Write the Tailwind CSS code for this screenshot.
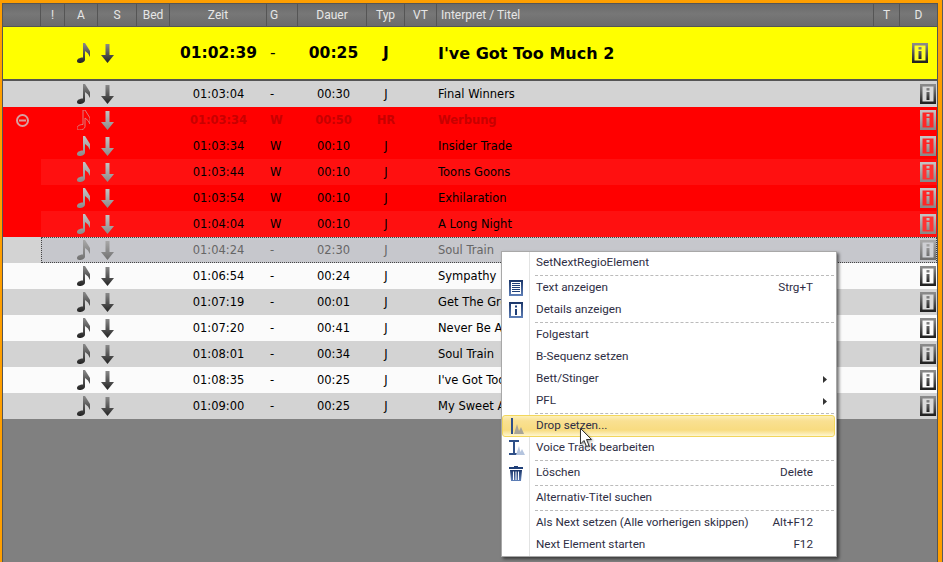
<!DOCTYPE html>
<html lang="en">
<head>
    <meta charset="UTF-8">
    <title>Playlist</title>
    <script src="https://cdn.jsdelivr.net/npm/@tailwindcss/browser@4"></script>
</head>
<body class="w-[943px] h-[562px] overflow-hidden bg-[#5a5a5a] font-['DejaVu_Sans',sans-serif]">

<!-- shared icons -->
<svg class="absolute w-0 h-0">
    <defs>
        <linearGradient id="gd" x1="0" y1="0" x2="0" y2="1"><stop offset="0" stop-color="#8a8a8a"/><stop offset="1" stop-color="#222"/></linearGradient>
        <linearGradient id="gl" x1="0" y1="0" x2="0" y2="1"><stop offset="0" stop-color="#c4c4c4"/><stop offset="1" stop-color="#8a8a8a"/></linearGradient>
        <linearGradient id="gs" x1="0" y1="0" x2="0" y2="1"><stop offset="0" stop-color="#a8a8a8"/><stop offset="1" stop-color="#707070"/></linearGradient>
        <linearGradient id="gb" x1="0" y1="0" x2="0" y2="1"><stop offset="0" stop-color="#1a3568"/><stop offset="1" stop-color="#5f80b8"/></linearGradient>
        <symbol id="note" viewBox="0 0 13 20"><path d="M6 0H8L13 8V14L11 10.500L8 8V16.500C8 18.500 5.500 20 2.500 20C.8 20 0 19.200 0 18C0 16.200 2.500 14.500 6 14.500Z"/></symbol>
        <symbol id="arrow" viewBox="0 0 13 19"><path d="M4.500 0H8.500V11H13L6.500 19L0 11H4.500Z"/></symbol>
        <symbol id="info" viewBox="0 0 16 20">
            <rect x="1.250" y="1.250" width="13.500" height="17.500" fill="#fff" fill-opacity=".15" stroke-width="2.500"/>
            <path stroke="none" d="M6.500 4H9.500V6.500H6.500ZM6.500 8H9.500V16H6.500Z"/>
        </symbol>
    </defs>
</svg>

<div class="w-[942px] h-[562px] bg-[#ff9f00] pl-[2px] pt-[3px] pr-[4px]">
    <div class="relative h-full bg-[#808080] border-x border-t border-[#555]">

        <!-- header -->
        <div class="grid grid-cols-[38px_24px_33px_39px_33px_97px_31px_69px_38px_32px_437px_26px_37px] h-[23px] border-b border-[#555] bg-[linear-gradient(#6a6a6a,#777_45%,#6b6b6b)] text-[#e6e6e6] text-[12px] font-['Roboto',sans-serif] leading-[23px] text-center">
            <span class="border-r border-[#555]"></span>
            <span class="border-r border-[#555]">!</span>
            <span class="border-r border-[#555]">A</span>
            <span class="border-r border-[#555]">S</span>
            <span class="border-r border-[#555]">Bed</span>
            <span class="border-r border-[#555]">Zeit</span>
            <span class="border-r border-[#555] text-left pl-[3px]">G</span>
            <span class="border-r border-[#555]">Dauer</span>
            <span class="border-r border-[#555]">Typ</span>
            <span class="border-r border-[#555]">VT</span>
            <span class="border-r border-[#555] text-left pl-[4px]">Interpret / Titel</span>
            <span class="border-r border-[#555]">T</span>
            <span>D</span>
        </div>

        <!-- current element -->
        <div class="grid grid-cols-[38px_24px_33px_39px_33px_97px_31px_69px_38px_32px_437px_26px_37px] h-[54px] items-center bg-[#ffff00] border-b-2 border-[#555] text-[15.500px] font-bold text-black [&>span]:pt-[2px]">
            <span></span><span></span>
            <svg class="ml-3 w-[13px] h-5" fill="url(#gd)"><use href="#note"/></svg>
            <svg class="ml-[3px] w-[13px] h-[19px]" fill="url(#gd)"><use href="#arrow"/></svg>
            <span></span>
            <span class="text-center">01:02:39</span>
            <span class="pl-[3px] font-normal">-</span>
            <span class="text-center pl-[2px]">00:25</span>
            <span class="text-center">J</span>
            <span></span>
            <span class="pl-px text-[16px]">I've Got Too Much 2</span>
            <span></span>
            <svg class="ml-3 w-4 h-5" fill="url(#gd)" stroke="url(#gd)"><use href="#info"/></svg>
        </div>

        <!-- rows -->
        <div class="grid grid-cols-[38px_24px_33px_39px_33px_97px_31px_69px_38px_32px_437px_26px_37px] h-[26px] items-center bg-[#d3d3d3] text-[11.500px] text-black [&>span]:pt-[2px]">
            <span></span><span></span>
            <svg class="ml-3 w-[13px] h-5" fill="url(#gd)"><use href="#note"/></svg>
            <svg class="ml-[3px] w-[13px] h-[19px]" fill="url(#gd)"><use href="#arrow"/></svg>
            <span></span>
            <span class="text-center">01:03:04</span>
            <span class="pl-[3px]">-</span>
            <span class="text-center pl-[2px]">00:30</span>
            <span class="text-center">J</span>
            <span></span>
            <span class="pl-px">Final Winners</span>
            <span></span>
            <svg class="ml-5 w-4 h-5" fill="url(#gd)" stroke="url(#gd)"><use href="#info"/></svg>
        </div>

        <div class="grid grid-cols-[38px_24px_33px_39px_33px_97px_31px_69px_38px_32px_437px_26px_37px] h-[26px] items-center bg-[#ff0000] text-[11.500px] font-bold text-[#c80000] [&>span]:pt-[2px]">
            <svg class="ml-[13px] w-[13px] h-[13px]" viewBox="0 0 13 13" fill="none" stroke="#d8a0a0" stroke-width="2"><circle cx="6.500" cy="6.500" r="5.500"/><path d="M3 6.500H10"/></svg>
            <span></span>
            <svg class="ml-3 w-[13px] h-5" fill="none" stroke="#d88a8a" stroke-width=".9"><use href="#note"/></svg>
            <svg class="ml-[3px] w-[13px] h-[19px]" fill="url(#gl)"><use href="#arrow"/></svg>
            <span></span>
            <span class="text-center">01:03:34</span>
            <span class="pl-[3px]">W</span>
            <span class="text-center pl-[2px]">00:50</span>
            <span class="text-center">HR</span>
            <span></span>
            <span class="pl-px">Werbung</span>
            <span></span>
            <svg class="ml-5 w-4 h-5" fill="url(#gl)" stroke="url(#gl)"><use href="#info"/></svg>
        </div>

        <div class="grid grid-cols-[38px_24px_33px_39px_33px_97px_31px_69px_38px_32px_437px_26px_37px] h-[26px] items-center bg-[#ff0000] text-[11.500px] text-black [&>span]:pt-[2px]">
            <span></span><span></span>
            <svg class="ml-3 w-[13px] h-5" fill="url(#gl)"><use href="#note"/></svg>
            <svg class="ml-[3px] w-[13px] h-[19px]" fill="url(#gl)"><use href="#arrow"/></svg>
            <span></span>
            <span class="text-center">01:03:34</span>
            <span class="pl-[3px]">W</span>
            <span class="text-center pl-[2px]">00:10</span>
            <span class="text-center">J</span>
            <span></span>
            <span class="pl-px">Insider Trade</span>
            <span></span>
            <svg class="ml-5 w-4 h-5" fill="url(#gl)" stroke="url(#gl)"><use href="#info"/></svg>
        </div>

        <div class="grid grid-cols-[38px_24px_33px_39px_33px_97px_31px_69px_38px_32px_437px_26px_37px] h-[26px] items-center bg-[linear-gradient(90deg,#ff0000_38px,#ff1010_38px)] text-[11.500px] text-black [&>span]:pt-[2px]">
            <span></span><span></span>
            <svg class="ml-3 w-[13px] h-5" fill="url(#gl)"><use href="#note"/></svg>
            <svg class="ml-[3px] w-[13px] h-[19px]" fill="url(#gl)"><use href="#arrow"/></svg>
            <span></span>
            <span class="text-center">01:03:44</span>
            <span class="pl-[3px]">W</span>
            <span class="text-center pl-[2px]">00:10</span>
            <span class="text-center">J</span>
            <span></span>
            <span class="pl-px">Toons Goons</span>
            <span></span>
            <svg class="ml-5 w-4 h-5" fill="url(#gl)" stroke="url(#gl)"><use href="#info"/></svg>
        </div>

        <div class="grid grid-cols-[38px_24px_33px_39px_33px_97px_31px_69px_38px_32px_437px_26px_37px] h-[26px] items-center bg-[#ff0000] text-[11.500px] text-black [&>span]:pt-[2px]">
            <span></span><span></span>
            <svg class="ml-3 w-[13px] h-5" fill="url(#gl)"><use href="#note"/></svg>
            <svg class="ml-[3px] w-[13px] h-[19px]" fill="url(#gl)"><use href="#arrow"/></svg>
            <span></span>
            <span class="text-center">01:03:54</span>
            <span class="pl-[3px]">W</span>
            <span class="text-center pl-[2px]">00:10</span>
            <span class="text-center">J</span>
            <span></span>
            <span class="pl-px">Exhilaration</span>
            <span></span>
            <svg class="ml-5 w-4 h-5" fill="url(#gl)" stroke="url(#gl)"><use href="#info"/></svg>
        </div>

        <div class="grid grid-cols-[38px_24px_33px_39px_33px_97px_31px_69px_38px_32px_437px_26px_37px] h-[26px] items-center bg-[linear-gradient(90deg,#ff0000_38px,#ff1010_38px)] text-[11.500px] text-black [&>span]:pt-[2px]">
            <span></span><span></span>
            <svg class="ml-3 w-[13px] h-5" fill="url(#gl)"><use href="#note"/></svg>
            <svg class="ml-[3px] w-[13px] h-[19px]" fill="url(#gl)"><use href="#arrow"/></svg>
            <span></span>
            <span class="text-center">01:04:04</span>
            <span class="pl-[3px]">W</span>
            <span class="text-center pl-[2px]">00:10</span>
            <span class="text-center">J</span>
            <span></span>
            <span class="pl-px">A Long Night</span>
            <span></span>
            <svg class="ml-5 w-4 h-5" fill="url(#gl)" stroke="url(#gl)"><use href="#info"/></svg>
        </div>

        <!-- focused row -->
        <div class="relative grid grid-cols-[38px_24px_33px_39px_33px_97px_31px_69px_38px_32px_437px_26px_37px] h-[26px] items-center bg-[linear-gradient(90deg,#d3d3d3_38px,#c6c7cc_38px)] text-[11.500px] text-[#666] [&>span]:pt-[2px]">
            <span class="absolute left-[38px] right-0 inset-y-0 border border-dotted border-[#444]"></span>
            <span></span><span></span>
            <svg class="ml-3 w-[13px] h-5" fill="url(#gs)"><use href="#note"/></svg>
            <svg class="ml-[3px] w-[13px] h-[19px]" fill="url(#gs)"><use href="#arrow"/></svg>
            <span></span>
            <span class="text-center">01:04:24</span>
            <span class="pl-[3px]">-</span>
            <span class="text-center pl-[2px]">02:30</span>
            <span class="text-center">J</span>
            <span></span>
            <span class="pl-px">Soul Train</span>
            <span></span>
            <svg class="ml-5 w-4 h-5" fill="url(#gs)" stroke="url(#gs)"><use href="#info"/></svg>
        </div>

        <div class="grid grid-cols-[38px_24px_33px_39px_33px_97px_31px_69px_38px_32px_437px_26px_37px] h-[26px] items-center bg-[#fbfbfb] text-[11.500px] text-black [&>span]:pt-[2px]">
            <span></span><span></span>
            <svg class="ml-3 w-[13px] h-5" fill="url(#gd)"><use href="#note"/></svg>
            <svg class="ml-[3px] w-[13px] h-[19px]" fill="url(#gd)"><use href="#arrow"/></svg>
            <span></span>
            <span class="text-center">01:06:54</span>
            <span class="pl-[3px]">-</span>
            <span class="text-center pl-[2px]">00:24</span>
            <span class="text-center">J</span>
            <span></span>
            <span class="pl-px">Sympathy</span>
            <span></span>
            <svg class="ml-5 w-4 h-5" fill="url(#gd)" stroke="url(#gd)"><use href="#info"/></svg>
        </div>

        <div class="grid grid-cols-[38px_24px_33px_39px_33px_97px_31px_69px_38px_32px_437px_26px_37px] h-[26px] items-center bg-[#d3d3d3] text-[11.500px] text-black [&>span]:pt-[2px]">
            <span></span><span></span>
            <svg class="ml-3 w-[13px] h-5" fill="url(#gd)"><use href="#note"/></svg>
            <svg class="ml-[3px] w-[13px] h-[19px]" fill="url(#gd)"><use href="#arrow"/></svg>
            <span></span>
            <span class="text-center">01:07:19</span>
            <span class="pl-[3px]">-</span>
            <span class="text-center pl-[2px]">00:01</span>
            <span class="text-center">J</span>
            <span></span>
            <span class="pl-px">Get The Groove</span>
            <span></span>
            <svg class="ml-5 w-4 h-5" fill="url(#gd)" stroke="url(#gd)"><use href="#info"/></svg>
        </div>

        <div class="grid grid-cols-[38px_24px_33px_39px_33px_97px_31px_69px_38px_32px_437px_26px_37px] h-[26px] items-center bg-[#fbfbfb] text-[11.500px] text-black [&>span]:pt-[2px]">
            <span></span><span></span>
            <svg class="ml-3 w-[13px] h-5" fill="url(#gd)"><use href="#note"/></svg>
            <svg class="ml-[3px] w-[13px] h-[19px]" fill="url(#gd)"><use href="#arrow"/></svg>
            <span></span>
            <span class="text-center">01:07:20</span>
            <span class="pl-[3px]">-</span>
            <span class="text-center pl-[2px]">00:41</span>
            <span class="text-center">J</span>
            <span></span>
            <span class="pl-px">Never Be Alone</span>
            <span></span>
            <svg class="ml-5 w-4 h-5" fill="url(#gd)" stroke="url(#gd)"><use href="#info"/></svg>
        </div>

        <div class="grid grid-cols-[38px_24px_33px_39px_33px_97px_31px_69px_38px_32px_437px_26px_37px] h-[26px] items-center bg-[#d3d3d3] text-[11.500px] text-black [&>span]:pt-[2px]">
            <span></span><span></span>
            <svg class="ml-3 w-[13px] h-5" fill="url(#gd)"><use href="#note"/></svg>
            <svg class="ml-[3px] w-[13px] h-[19px]" fill="url(#gd)"><use href="#arrow"/></svg>
            <span></span>
            <span class="text-center">01:08:01</span>
            <span class="pl-[3px]">-</span>
            <span class="text-center pl-[2px]">00:34</span>
            <span class="text-center">J</span>
            <span></span>
            <span class="pl-px">Soul Train</span>
            <span></span>
            <svg class="ml-5 w-4 h-5" fill="url(#gd)" stroke="url(#gd)"><use href="#info"/></svg>
        </div>

        <div class="grid grid-cols-[38px_24px_33px_39px_33px_97px_31px_69px_38px_32px_437px_26px_37px] h-[26px] items-center bg-[#fbfbfb] text-[11.500px] text-black [&>span]:pt-[2px]">
            <span></span><span></span>
            <svg class="ml-3 w-[13px] h-5" fill="url(#gd)"><use href="#note"/></svg>
            <svg class="ml-[3px] w-[13px] h-[19px]" fill="url(#gd)"><use href="#arrow"/></svg>
            <span></span>
            <span class="text-center">01:08:35</span>
            <span class="pl-[3px]">-</span>
            <span class="text-center pl-[2px]">00:25</span>
            <span class="text-center">J</span>
            <span></span>
            <span class="pl-px">I've Got Too Much</span>
            <span></span>
            <svg class="ml-5 w-4 h-5" fill="url(#gd)" stroke="url(#gd)"><use href="#info"/></svg>
        </div>

        <div class="grid grid-cols-[38px_24px_33px_39px_33px_97px_31px_69px_38px_32px_437px_26px_37px] h-[26px] items-center bg-[#d3d3d3] text-[11.500px] text-black [&>span]:pt-[2px]">
            <span></span><span></span>
            <svg class="ml-3 w-[13px] h-5" fill="url(#gd)"><use href="#note"/></svg>
            <svg class="ml-[3px] w-[13px] h-[19px]" fill="url(#gd)"><use href="#arrow"/></svg>
            <span></span>
            <span class="text-center">01:09:00</span>
            <span class="pl-[3px]">-</span>
            <span class="text-center pl-[2px]">00:25</span>
            <span class="text-center">J</span>
            <span></span>
            <span class="pl-px">My Sweet Angel</span>
            <span></span>
            <svg class="ml-5 w-4 h-5" fill="url(#gd)" stroke="url(#gd)"><use href="#info"/></svg>
        </div>

        <!-- context menu -->
        <div class="absolute left-[498px] top-[247px] w-[336px] border border-[#a8a8a8] bg-[linear-gradient(90deg,#fff_27px,#e2e3e3_27px,#e2e3e3_28px,#fff_28px)] shadow-[2px_2px_3px_rgba(0,0,0,.55)] text-[11.700px] text-[#2e2e44] font-['Roboto',sans-serif]">
            <div class="flex items-center h-[22px] pl-[34px]">SetNextRegioElement</div>
            <div class="my-px ml-[33px] mr-[2px] border-t border-dashed border-[#bbb]"></div>
            <div class="flex items-center h-[22px]">
                <span class="w-[34px] pl-[7px]">
                    <svg class="w-[14px] h-4" viewBox="0 0 14 16"><rect width="14" height="16" fill="url(#gb)"/><rect x="2" y="2" width="10" height="12" fill="#fff"/><path d="M3 3.500H11M3 5.500H11M3 7.500H11M3 9.500H11M3 11.500H11" stroke="#1f3f78"/></svg>
                </span>
                <span class="flex-1">Text anzeigen</span><span class="pr-[23px]">Strg+T</span>
            </div>
            <div class="flex items-center h-[22px]">
                <span class="w-[34px] pl-[7px]">
                    <svg class="w-[14px] h-4" viewBox="0 0 14 16"><rect width="14" height="16" fill="url(#gb)"/><rect x="2" y="2" width="10" height="12" fill="#fff"/><path d="M6 3.500H8V5.500H6ZM6 7H8V13H6Z" fill="#1f3f78"/></svg>
                </span>
                <span>Details anzeigen</span>
            </div>
            <div class="my-px ml-[33px] mr-[2px] border-t border-dashed border-[#bbb]"></div>
            <div class="flex items-center h-[22px] pl-[34px]">Folgestart</div>
            <div class="flex items-center h-[22px] pl-[34px]">B-Sequenz setzen</div>
            <div class="flex items-center h-[22px] pl-[34px] pr-[9px] justify-between">
                <span>Bett/Stinger</span>
                <svg class="w-1 h-[7px]" viewBox="0 0 4 7" fill="#333"><path d="M0 0L4 3.500L0 7Z"/></svg>
            </div>
            <div class="flex items-center h-[22px] pl-[34px] pr-[9px] justify-between">
                <span>PFL</span>
                <svg class="w-1 h-[7px]" viewBox="0 0 4 7" fill="#333"><path d="M0 0L4 3.500L0 7Z"/></svg>
            </div>
            <div class="my-px ml-[33px] mr-[2px] border-t border-dashed border-[#bbb]"></div>
            <div class="flex items-center h-[22px] mr-px border border-[#f2d65c] rounded-[3px] bg-[linear-gradient(#fdf0b8,#f9e092_25%,#f8dc80_70%,#fef6d0)]">
                <span class="w-[33px] pl-[6px]">
                    <svg class="w-[16px] h-4" viewBox="0 0 16 16"><path d="M2 0H4V16H2Z" fill="#2f5088"/><path d="M5 16L8 6L10 13L12 9L15 16Z" fill="#a9a598"/></svg>
                </span>
                <span>Drop setzen...</span>
            </div>
            <div class="flex items-center h-[22px]">
                <span class="w-[34px] pl-[7px]">
                    <svg class="w-[16px] h-[17px]" viewBox="0 0 16 17"><path d="M0 0H10V2H6V13H10V15H0V13H4V2H0Z" fill="#2f5088"/><path d="M7 15L10 6L11.500 12L13 9L16 15Z" fill="#b4c4de"/></svg>
                </span>
                <span>Voice Track bearbeiten</span>
            </div>
            <div class="my-px ml-[33px] mr-[2px] border-t border-dashed border-[#bbb]"></div>
            <div class="flex items-center h-[22px]">
                <span class="w-[34px] pl-[7px]">
                    <svg class="w-[14px] h-[15px]" viewBox="0 0 14 15"><path d="M5 0H9V1H14V3H0V1H5Z" fill="#1f3f78"/><path d="M1 4H13L12 15H2Z" fill="url(#gb)"/><path d="M4.500 5.500V14M7 5.500V14M9.500 5.500V14" stroke="#fff"/></svg>
                </span>
                <span class="flex-1">Löschen</span><span class="pr-[23px]">Delete</span>
            </div>
            <div class="my-px ml-[33px] mr-[2px] border-t border-dashed border-[#bbb]"></div>
            <div class="flex items-center h-[22px] pl-[34px]">Alternativ-Titel suchen</div>
            <div class="my-px ml-[33px] mr-[2px] border-t border-dashed border-[#bbb]"></div>
            <div class="flex items-center h-[22px] pl-[34px]">
                <span class="flex-1">Als Next setzen (Alle vorherigen skippen)</span><span class="pr-[23px]">Alt+F12</span>
            </div>
            <div class="flex items-center h-[22px] pl-[34px]">
                <span class="flex-1">Next Element starten</span><span class="pr-[23px]">F12</span>
            </div>
        </div>

        <!-- mouse pointer -->
        <svg class="absolute left-[577px] top-[424px] w-[14px] h-[20px] drop-shadow-[1px_1px_1px_rgba(0,0,0,.4)]" viewBox="0 0 14 20"><path d="M.5 .5V16L4 12.500L6.500 18.500L9 17.500L6.500 11.500H11.500Z" fill="#fff" stroke="#333"/></svg>
    </div>
</div>

</body>
</html>
